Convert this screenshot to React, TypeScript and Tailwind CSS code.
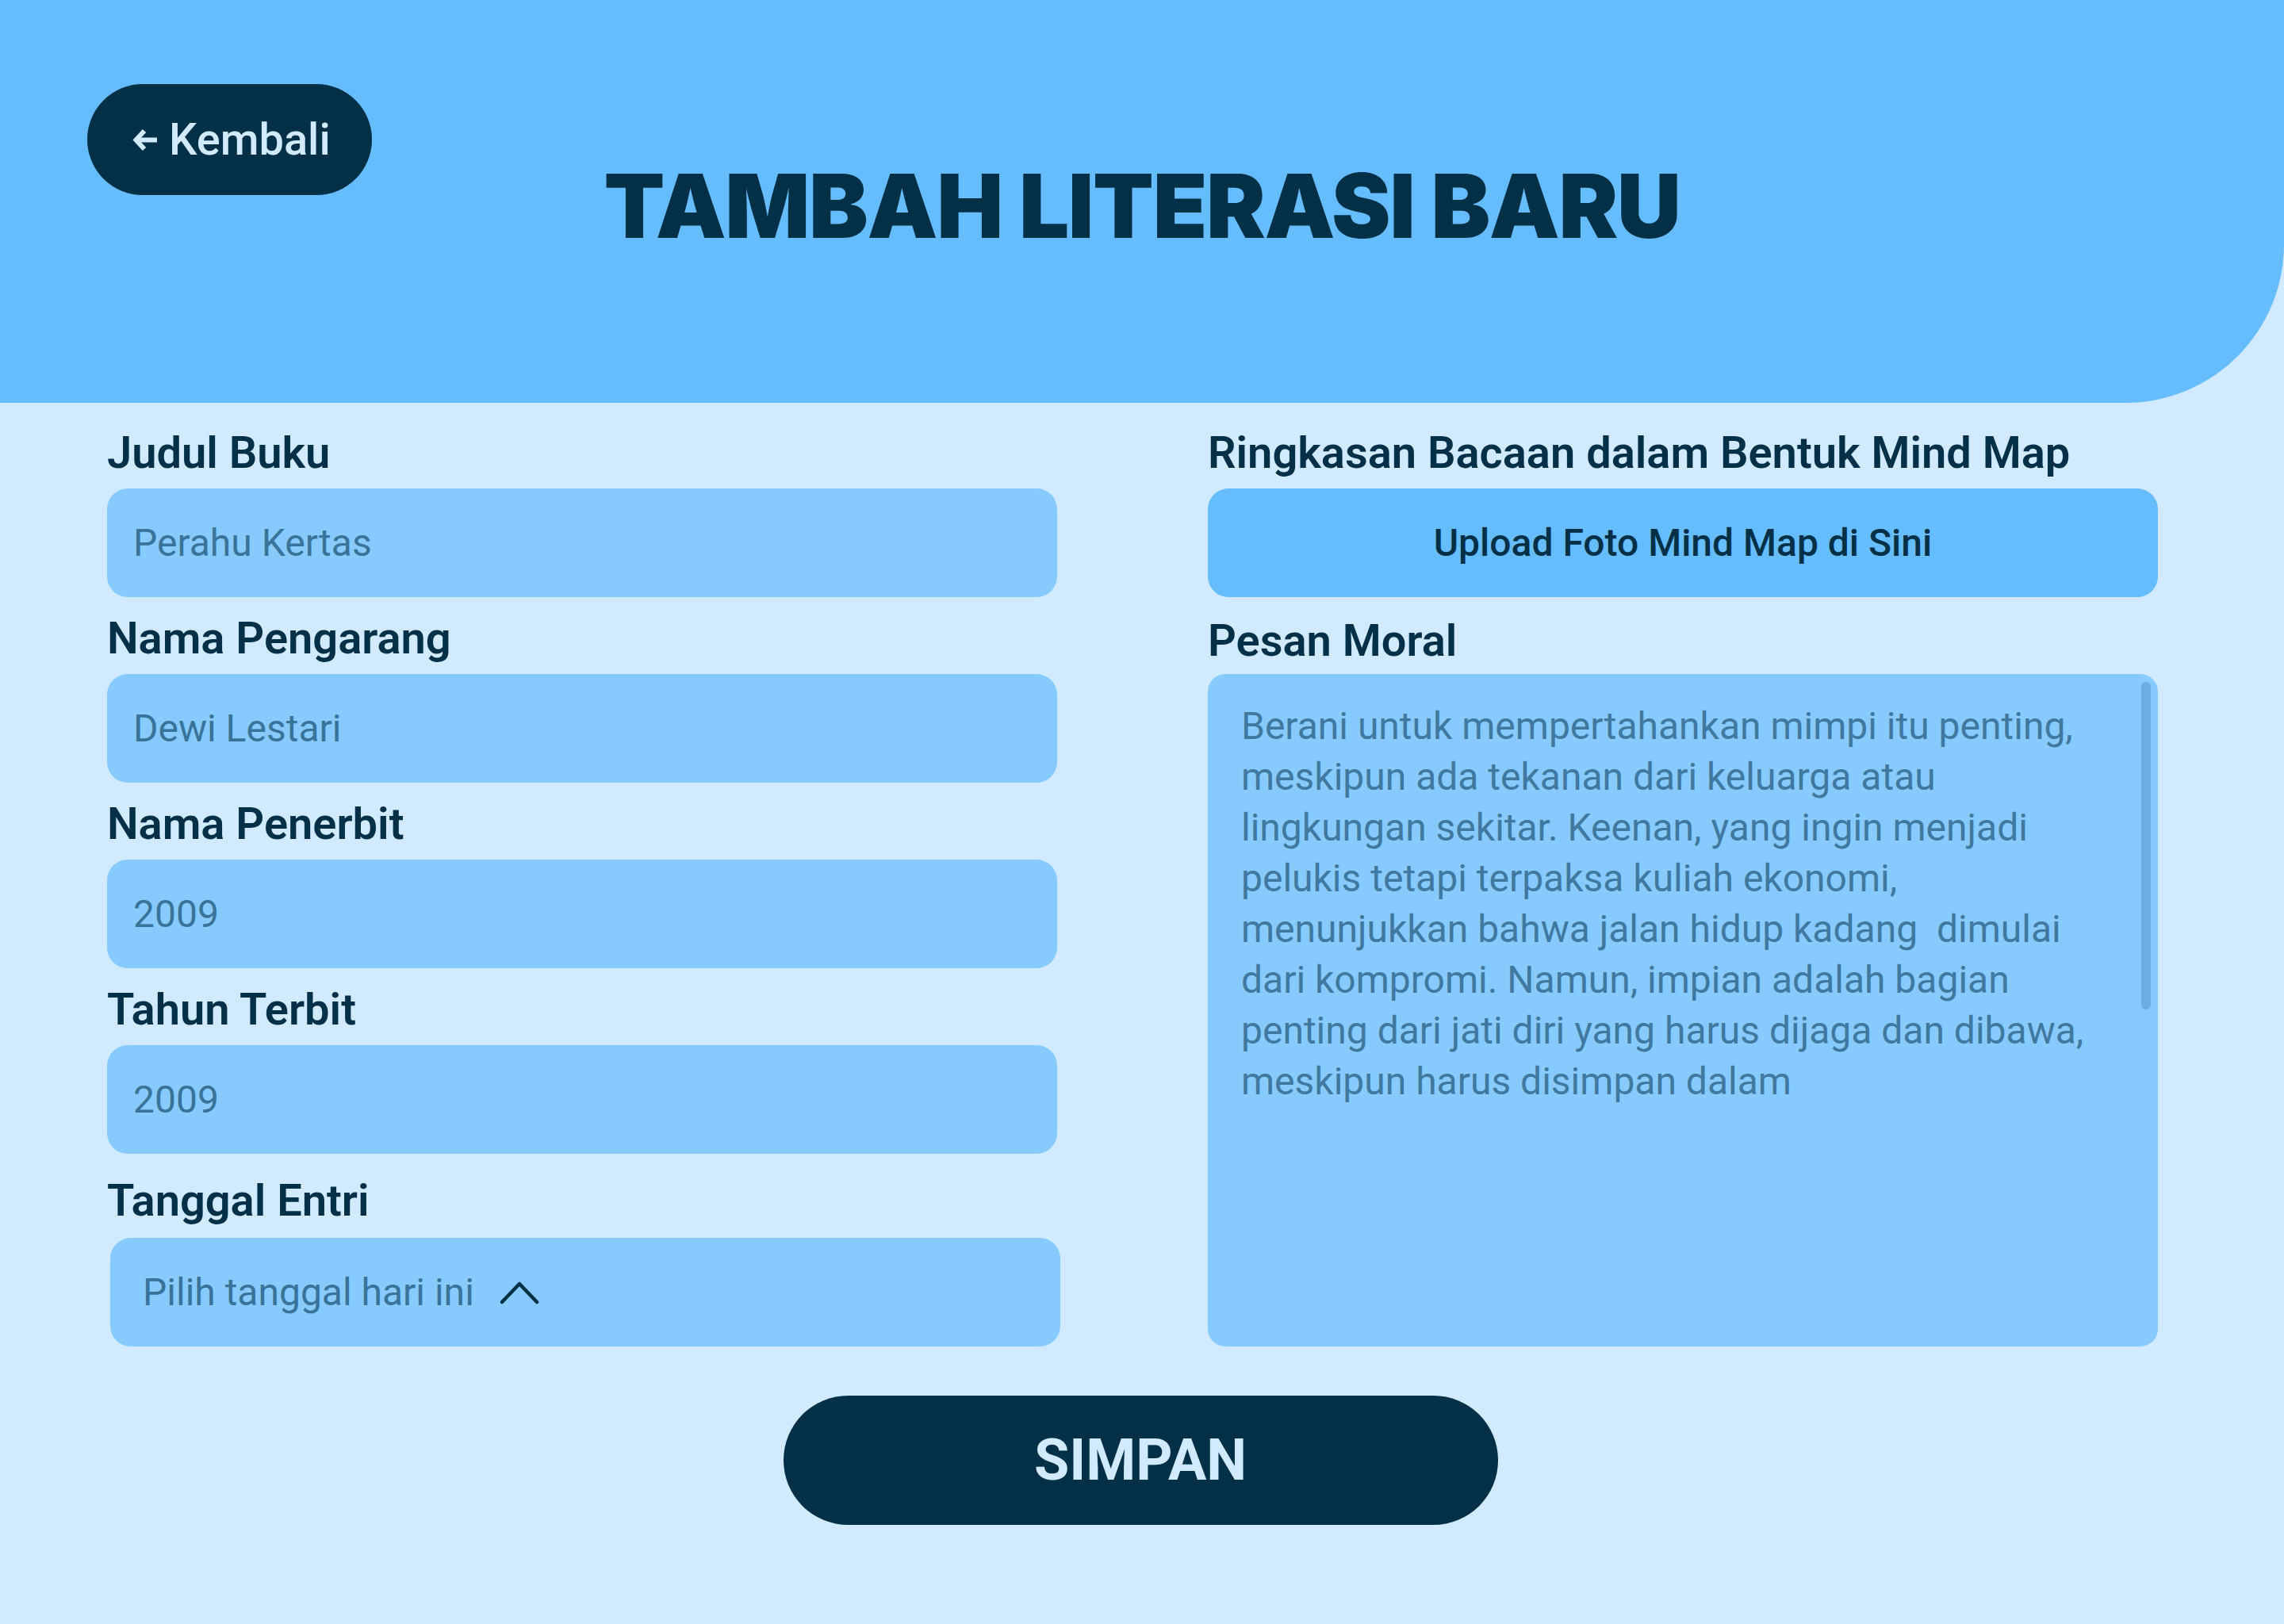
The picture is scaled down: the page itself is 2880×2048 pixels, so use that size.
import React from "react";

const NAVY = "text-[#023047]";

function Field({
  label,
  value,
}: {
  label: string;
  value: string;
}) {
  return (
    <div className="flex flex-col">
      <div className={`text-[56px] font-semibold leading-[64px] h-[64px] ${NAVY}`}>{label}</div>
      <div className="mt-[13px] h-[137px] rounded-[26px] bg-[#87cbfe] flex items-center px-[33px] text-[48px] leading-none text-[#3a7399]">
        {value}
      </div>
    </div>
  );
}

const moral = [
  "Berani untuk mempertahankan mimpi itu penting,",
  "meskipun ada tekanan dari keluarga atau",
  "lingkungan sekitar. Keenan, yang ingin menjadi",
  "pelukis tetapi terpaksa kuliah ekonomi,",
  "menunjukkan bahwa jalan hidup kadang  dimulai",
  "dari kompromi. Namun, impian adalah bagian",
  "penting dari jati diri yang harus dijaga dan dibawa,",
  "meskipun harus disimpan dalam",
];

export default function App() {
  return (
    <div className="min-h-screen w-full bg-[#d1eaff] font-[Roboto,sans-serif]">
      <header className="h-[508px] bg-[#66bdfd] rounded-br-[200px] px-[110px] pt-[106px] grid grid-cols-[1fr_auto_1fr] items-start">
        <button className="justify-self-start h-[140px] rounded-full bg-[#023047] pl-[57px] pr-[52px] flex items-center gap-[15px] text-[#d1eaff] text-[56px] font-medium leading-none">
          <svg width="31" height="31" viewBox="0 0 31 31" fill="none" stroke="currentColor" strokeWidth="6" strokeLinecap="butt" strokeLinejoin="miter">
            <path d="M15 4 4.5 15.5 15 27" />
            <path d="M6 15.5H31" />
          </svg>
          <span>Kembali</span>
        </button>
        <h1 className={`mt-[88px] font-[Inter,sans-serif] text-[112px] font-black tracking-[-0.012em] leading-[131px] whitespace-nowrap ${NAVY}`}>
          TAMBAH LITERASI BARU
        </h1>
        <div />
      </header>

      <main className="px-[135px] pt-[31px]">
        <div className="flex gap-[190px]">
          <div className="w-[1198px] shrink-0 flex flex-col gap-[20px]">
            <Field label="Judul Buku" value="Perahu Kertas" />
            <Field label="Nama Pengarang" value="Dewi Lestari" />
            <Field label="Nama Penerbit" value="2009" />
            <Field label="Tahun Terbit" value="2009" />
            <div className="flex flex-col mt-[7px]">
              <div className={`text-[56px] font-semibold leading-[64px] h-[64px] ${NAVY}`}>Tanggal Entri</div>
              <div className="mt-[15px] ml-[4px] w-[1198px] shrink-0 h-[137px] rounded-[26px] bg-[#87cbfe] flex items-center pl-[41px] text-[48px] leading-none text-[#3a7399]">
                <span>Pilih tanggal hari ini</span>
                <svg className="ml-[32px]" width="50" height="30" viewBox="0 0 50 30" fill="none" stroke="#023047" strokeWidth="4.5" strokeLinecap="round" strokeLinejoin="round">
                  <path d="M3 27 25 4 47 27" />
                </svg>
              </div>
            </div>
          </div>

          <div className="w-[1198px] shrink-0 flex flex-col">
            <div className={`text-[56px] font-semibold leading-[64px] h-[64px] ${NAVY}`}>
              Ringkasan Bacaan dalam Bentuk Mind Map
            </div>
            <button className={`mt-[13px] h-[137px] rounded-[26px] bg-[#66bdfd] flex items-center justify-center text-[48px] font-medium leading-none ${NAVY}`}>
              Upload Foto Mind Map di Sini
            </button>
            <div className={`mt-[23px] text-[56px] font-semibold leading-[64px] h-[64px] ${NAVY}`}>Pesan Moral</div>
            <div className="relative mt-[10px] h-[848px] rounded-[22px] bg-[#87cbfe] pl-[42px] pt-[34px] text-[48px] leading-[64px] text-[#4078a0]">
              {moral.map((l, i) => (
                <div key={i} className="whitespace-pre">
                  {l}
                </div>
              ))}
              <div className="absolute right-[9px] top-[10px] w-[12px] h-[413px] rounded-full bg-[#6aaee3]" />
            </div>
          </div>
        </div>

        <div className="flex justify-center pr-[4px]">
          <button className="mt-[62px] w-[901px] h-[163px] rounded-full bg-[#023047] text-[#d1eaff] text-[72px] font-bold leading-none">
            SIMPAN
          </button>
        </div>
      </main>
    </div>
  );
}
